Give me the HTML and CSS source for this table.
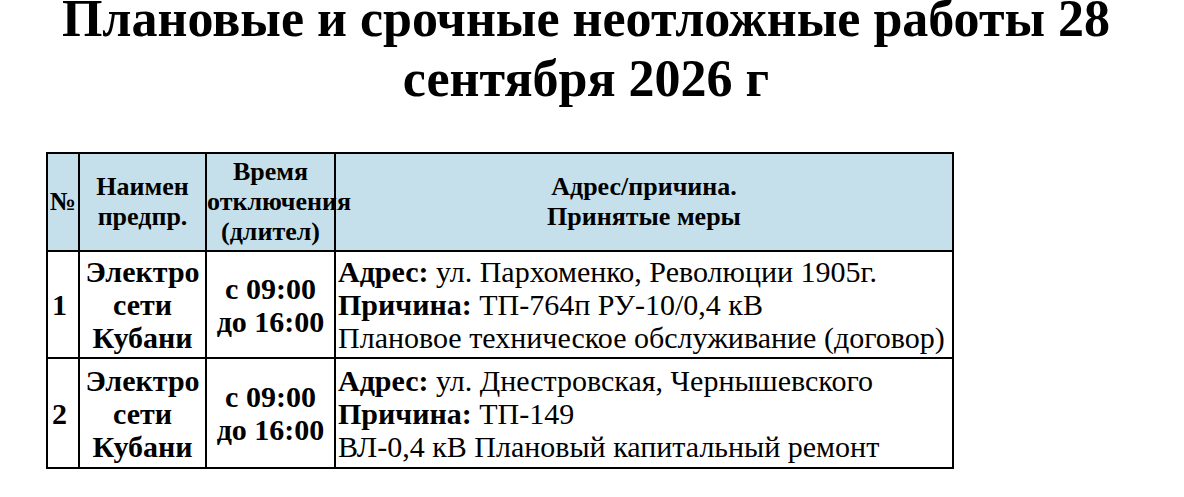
FILE: index.html
```html
<!DOCTYPE html>
<html lang="ru">
<head>
<meta charset="utf-8">
<link rel="stylesheet" href="styles.css">
</head>
<body>
<h1 class="title"><span>Плановые и срочные неотложные работы 28</span><span>сентября 2026 г</span></h1>
<table class="works">
  <colgroup>
    <col class="c-num">
    <col class="c-org">
    <col class="c-time">
    <col class="c-addr">
  </colgroup>
  <thead>
    <tr>
      <th>№</th>
      <th>Наимен<br>предпр.</th>
      <th>Время<br>отключения<br>(длител)</th>
      <th>Адрес/причина.<br>Принятые меры</th>
    </tr>
  </thead>
  <tbody>
    <tr class="row-a">
      <td class="num">1</td>
      <td class="org">Электро<br>сети<br>Кубани</td>
      <td class="time">с 09:00<br>до 16:00</td>
      <td class="addr"><b>Адрес:</b> ул. Пархоменко, Революции 1905г.<br><b>Причина:</b> ТП-764п РУ-10/0,4 кВ<br>Плановое техническое обслуживание (договор)</td>
    </tr>
    <tr class="row-b">
      <td class="num">2</td>
      <td class="org">Электро<br>сети<br>Кубани</td>
      <td class="time">с 09:00<br>до 16:00</td>
      <td class="addr"><b>Адрес:</b> ул. Днестровская, Чернышевского<br><b>Причина:</b> ТП-149<br>ВЛ-0,4 кВ Плановый капитальный ремонт</td>
    </tr>
  </tbody>
</table>
</body>
</html>
```

FILE: styles.css
```css
html, body {
  margin: 0;
  padding: 0;
  background: #fff;
  color: #000;
  font-family: "Liberation Serif", "Times New Roman", serif;
}
body {
  padding: 0 0 0 46px;
}
.title {
  margin: 0;
  width: 1080px;
  display: flex;
  flex-direction: column;
  align-items: center;
  gap: 22px;
  text-align: center;
  font-size: 52px;
  line-height: 38px;
  font-weight: bold;
  white-space: nowrap;
}
.works {
  margin-top: 54px;
  border-collapse: collapse;
  table-layout: fixed;
  width: 908px;
  border: 2px solid #000;
}
.c-num { width: 32px; }
.c-org { width: 127px; }
.c-time { width: 129px; }
.works th, .works td {
  border: 2px solid #000;
  padding: 0;
  white-space: nowrap;
  overflow: visible;
}
.works th {
  background: #c5e0ea;
  font-size: 26px;
  line-height: 30px;
  height: 96px;
  text-align: center;
  vertical-align: middle;
}
.works td {
  font-size: 30px;
  line-height: 33px;
}
.row-a td { height: 105px; }
.row-b td { height: 108px; }
.num {
  font-weight: bold;
  text-align: left;
  padding-left: 4px !important;
}
.org, .time {
  font-weight: bold;
  text-align: center;
}
.addr {
  text-align: left;
  padding-left: 2px !important;
}
```
